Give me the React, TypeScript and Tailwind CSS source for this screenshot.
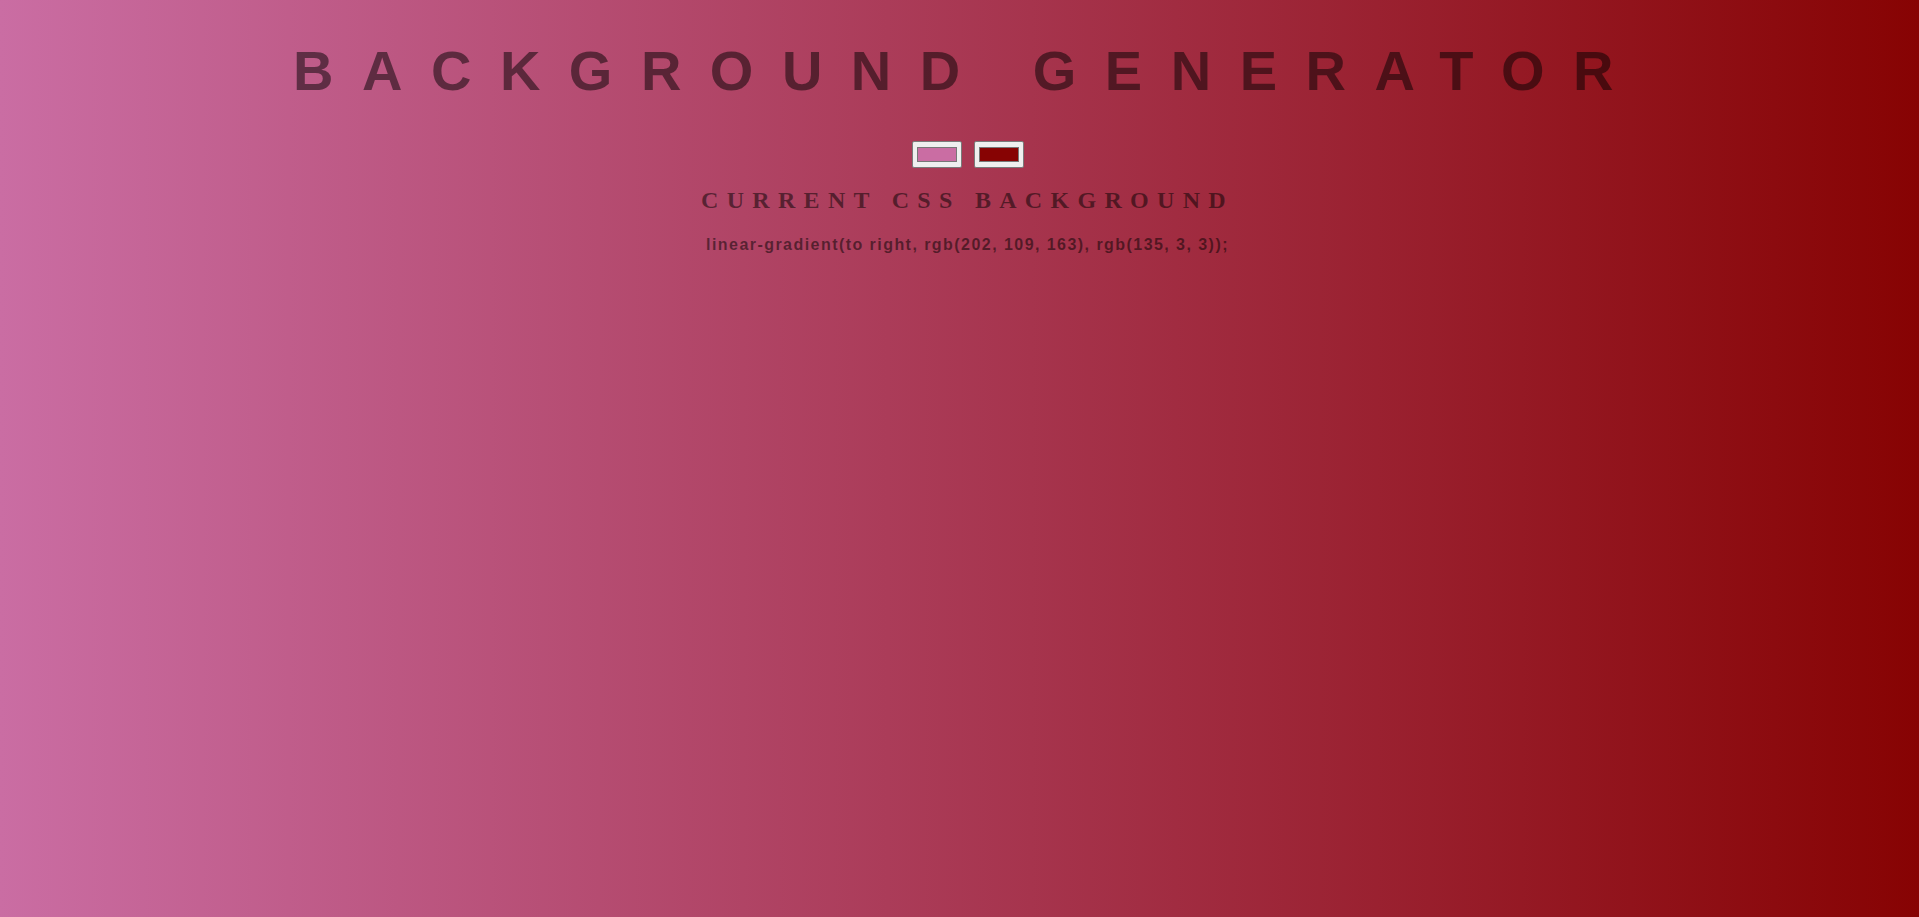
import { useState } from "react";

export default function App() {
  const [color1, setColor1] = useState("#ca6da3");
  const [color2, setColor2] = useState("#870303");

  const hexToRgb = (hex: string) => {
    const n = parseInt(hex.slice(1), 16);
    return `rgb(${(n >> 16) & 255}, ${(n >> 8) & 255}, ${n & 255})`;
  };

  const css = `linear-gradient(to right, ${hexToRgb(color1)}, ${hexToRgb(color2)})`;

  return (
    <div
      className="flex min-h-screen flex-col items-center pl-[16px] text-center text-black/50"
      style={{ background: css }}
    >
      {/* Title */}
      <h1 className="mt-[39px] w-full font-['Liberation_Sans',Arial,sans-serif] text-[56px] leading-[64px] font-bold tracking-[28.5px] uppercase">
        Background Generator
      </h1>

      {/* Colour pickers */}
      <div className="mt-[38px] flex gap-[12px]">
        <input
          type="color"
          value={color1}
          onChange={(e) => setColor1(e.target.value)}
          className="h-[27px] w-[50px] cursor-pointer rounded-[2px] border border-[#7a7a7a] bg-[#efefef] px-[2px] py-[1px]"
        />
        <input
          type="color"
          value={color2}
          onChange={(e) => setColor2(e.target.value)}
          className="h-[27px] w-[50px] cursor-pointer rounded-[2px] border border-[#7a7a7a] bg-[#efefef] px-[2px] py-[1px]"
        />
      </div>

      {/* Current value */}
      <h3 className="mt-[18px] font-['Liberation_Serif','Times_New_Roman',serif] text-[24px] leading-[28px] font-bold tracking-[8.3px] uppercase">
        Current CSS Background
      </h3>
      <p className="mt-[21px] font-['Liberation_Sans',Arial,sans-serif] text-[16px] leading-[20px] font-bold tracking-[1.45px]">
        {css};
      </p>
    </div>
  );
}
